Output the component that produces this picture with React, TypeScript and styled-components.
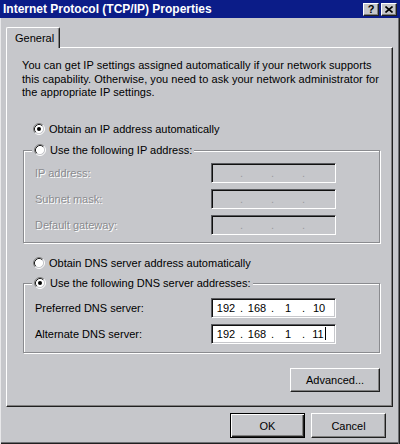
import React from "react";
import styled, { createGlobalStyle } from "styled-components";

const FACE = "#c6c7cb";

const Global = createGlobalStyle`
  html, body { margin: 0; padding: 0; background: ${FACE}; }
  body {
    width: 400px; height: 444px; overflow: hidden;
    font-family: "Liberation Sans", Arial, sans-serif;
    font-size: 11px; color: #000;
  }
`;

const Window = styled.div`
  width: 400px;
  height: 444px;
  box-sizing: border-box;
  background: ${FACE};
  display: flex;
  flex-direction: column;
  box-shadow: inset 1px 0 0 #e8e8ea, inset -1px 0 0 #202020, inset -2px 0 0 #6e6f73,
    inset 0 -1px 0 #202020, inset 0 -2px 0 #6e6f73;
`;

const TitleBar = styled.div`
  height: 18px;
  flex: none;
  background: #0b1c88;
  display: flex;
  align-items: center;
  justify-content: space-between;
  padding: 0 3px;
`;

const Title = styled.span`
  color: #fff;
  font-weight: bold;
  font-size: 12px;
`;

const CapButtons = styled.div`
  display: flex;
  gap: 2px;
`;

const CapButton = styled.div`
  width: 16px;
  height: 13px;
  box-sizing: border-box;
  background: ${FACE};
  border: 1px solid;
  border-color: #fff #202020 #202020 #fff;
  box-shadow: inset -1px -1px 0 #808080;
  display: flex;
  align-items: center;
  justify-content: center;
  font-weight: bold;
  font-size: 11px;
  line-height: 11px;
`;

const Body = styled.div`
  padding: 9px 7px 0 6px;
  display: flex;
  flex-direction: column;
`;

const TabStrip = styled.div`
  display: flex;
  height: 20px;
`;

const Tab = styled.div`
  position: relative;
  z-index: 1;
  width: 54px;
  height: 21px;
  box-sizing: border-box;
  background: ${FACE};
  border-top: 1px solid #fff;
  border-left: 1px solid #fff;
  border-right: 1px solid #202020;
  border-radius: 2px 2px 0 0;
  box-shadow: inset -1px 0 0 #808080;
  padding-left: 8px;
  display: flex;
  align-items: center;
  padding-bottom: 1px;
`;

const Panel = styled.div`
  height: 360px;
  box-sizing: border-box;
  border: 1px solid;
  border-color: #fff #202020 #202020 #fff;
  box-shadow: inset -1px -1px 0 #808080;
  padding: 11px 12px 0 15px;
  display: flex;
  flex-direction: column;
`;

const Intro = styled.p`
  margin: 0;
  line-height: 13.5px;
  letter-spacing: 0.05px;
`;

const RadioRow = styled.label<{ $mt: number }>`
  display: flex;
  align-items: center;
  gap: 4px;
  height: 14px;
  margin-top: ${(p) => p.$mt}px;
  padding-left: 11px;
  white-space: nowrap;
`;

const Group = styled.div<{ $mt: number; $pt: number; $pb: number }>`
  position: relative;
  margin: ${(p) => p.$mt}px 0 0 1px;
  border: 1px solid #8a8b8f;
  box-shadow: inset 1px 1px 0 #fff, 1px 1px 0 #fff;
  padding: ${(p) => p.$pt}px 43px ${(p) => p.$pb}px 11px;
  display: flex;
  flex-direction: column;
  gap: 6px;
`;

const Legend = styled.div`
  position: absolute;
  top: -8px;
  left: 8px;
  height: 14px;
  padding: 0 2px;
  background: ${FACE};
  display: flex;
  align-items: center;
  gap: 4px;
  white-space: nowrap;
`;

const FieldRow = styled.div`
  display: flex;
  align-items: center;
  justify-content: space-between;
  height: 20px;
`;

const FieldLabel = styled.span<{ $disabled?: boolean }>`
  color: ${(p) => (p.$disabled ? "#8a8b8f" : "#000")};
  text-shadow: ${(p) => (p.$disabled ? "1px 1px 0 #fff" : "none")};
`;

const IpBox = styled.div<{ $disabled?: boolean }>`
  width: 125px;
  height: 20px;
  box-sizing: border-box;
  background: ${(p) => (p.$disabled ? FACE : "#fff")};
  border: 1px solid;
  border-color: #5a5b5f #fff #fff #5a5b5f;
  box-shadow: inset 1px 1px 0 #101010, inset -1px -1px 0 ${FACE};
  padding-left: 2px;
  display: flex;
  align-items: center;
  color: ${(p) => (p.$disabled ? "#9a9b9f" : "#000")};
`;

const Octet = styled.span`
  width: 24px;
  text-align: center;
  white-space: nowrap;
`;

const Dot = styled.span`
  width: 7px;
  text-align: center;
`;

const Caret = styled.span`
  display: inline-block;
  width: 1px;
  height: 13px;
  background: #000;
  vertical-align: -2px;
  margin-left: 1px;
`;

const Button = styled.button<{ $w: number; $h: number; $default?: boolean }>`
  width: ${(p) => p.$w}px;
  height: ${(p) => p.$h}px;
  box-sizing: border-box;
  margin: 0;
  padding: 0;
  font-family: inherit;
  font-size: 11px;
  color: #000;
  background: ${FACE};
  border: 1px solid;
  border-color: #fff #202020 #202020 #fff;
  box-shadow: inset -1px -1px 0 #808080;
  outline: none;
  ${(p) =>
    p.$default
      ? `border: 1px solid #000; box-shadow: inset 1px 1px 0 #fff, inset -1px -1px 0 #202020, inset -2px -2px 0 #808080;`
      : ""}
`;

const AdvancedRow = styled.div`
  display: flex;
  justify-content: flex-end;
  margin-top: 15px;
`;

const Footer = styled.div`
  display: flex;
  justify-content: flex-end;
  gap: 6px;
  padding: 6px 7px 0 0;
`;

function Radio({ checked }: { checked?: boolean }) {
  return (
    <svg width="12" height="12" viewBox="0 0 12 12">
      <circle cx="6" cy="6" r="4.5" fill="#fff" />
      <path d="M2.11 9.89 A5.5 5.5 0 0 1 9.89 2.11" fill="none" stroke="#808080" />
      <path d="M9.89 2.11 A5.5 5.5 0 0 1 2.11 9.89" fill="none" stroke="#fff" />
      <path d="M2.82 9.18 A4.5 4.5 0 0 1 9.18 2.82" fill="none" stroke="#202020" />
      <path d="M9.18 2.82 A4.5 4.5 0 0 1 2.82 9.18" fill="none" stroke={FACE} />
      {checked && <circle cx="6" cy="6" r="2" fill="#000" />}
    </svg>
  );
}

function Ip({ parts, disabled, caret }: { parts: string[]; disabled?: boolean; caret?: boolean }) {
  return (
    <IpBox $disabled={disabled}>
      <Octet>{parts[0]}</Octet>
      <Dot>.</Dot>
      <Octet>{parts[1]}</Octet>
      <Dot>.</Dot>
      <Octet>{parts[2]}</Octet>
      <Dot>.</Dot>
      <Octet>
        {parts[3]}
        {caret && <Caret />}
      </Octet>
    </IpBox>
  );
}

export default function App() {
  return (
    <>
      <Global />
      <Window>
        <TitleBar>
          <Title>Internet Protocol (TCP/IP) Properties</Title>
          <CapButtons>
            <CapButton>?</CapButton>
            <CapButton>
              <svg width="8" height="7" viewBox="0 0 8 7">
                <path d="M0.5 0.5 L7.5 6.5 M7.5 0.5 L0.5 6.5" stroke="#000" strokeWidth="1.6" />
              </svg>
            </CapButton>
          </CapButtons>
        </TitleBar>
        <Body>
          <TabStrip>
            <Tab>General</Tab>
          </TabStrip>
          <Panel>
            <Intro>
              You can get IP settings assigned automatically if your network supports
              <br />
              this capability. Otherwise, you need to ask your network administrator for
              <br />
              the appropriate IP settings.
            </Intro>
            <RadioRow $mt={22}>
              <Radio checked />
              Obtain an IP address automatically
            </RadioRow>
            <Group $mt={14} $pt={12} $pb={7}>
              <Legend>
                <Radio />
                Use the following IP address:
              </Legend>
              <FieldRow>
                <FieldLabel $disabled>IP address:</FieldLabel>
                <Ip parts={["", "", "", ""]} disabled />
              </FieldRow>
              <FieldRow>
                <FieldLabel $disabled>Subnet mask:</FieldLabel>
                <Ip parts={["", "", "", ""]} disabled />
              </FieldRow>
              <FieldRow>
                <FieldLabel $disabled>Default gateway:</FieldLabel>
                <Ip parts={["", "", "", ""]} disabled />
              </FieldRow>
            </Group>
            <RadioRow $mt={13}>
              <Radio />
              Obtain DNS server address automatically
            </RadioRow>
            <Group $mt={13} $pt={14} $pb={8}>
              <Legend>
                <Radio checked />
                Use the following DNS server addresses:
              </Legend>
              <FieldRow>
                <FieldLabel>Preferred DNS server:</FieldLabel>
                <Ip parts={["192", "168", "1", "10"]} />
              </FieldRow>
              <FieldRow>
                <FieldLabel>Alternate DNS server:</FieldLabel>
                <Ip parts={["192", "168", "1", "11"]} caret />
              </FieldRow>
            </Group>
            <AdvancedRow>
              <Button $w={90} $h={24}>Advanced...</Button>
            </AdvancedRow>
          </Panel>
          <Footer>
            <Button $w={75} $h={25} $default>OK</Button>
            <Button $w={75} $h={25}>Cancel</Button>
          </Footer>
        </Body>
      </Window>
    </>
  );
}
